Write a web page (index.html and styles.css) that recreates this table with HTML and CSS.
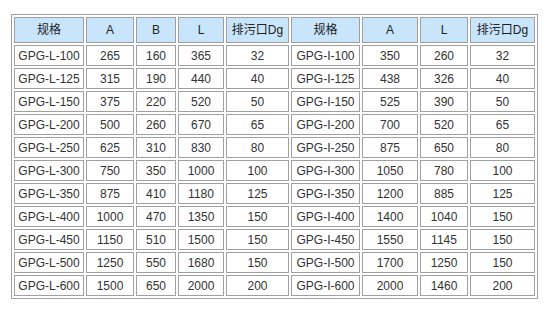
FILE: index.html
```html
<!DOCTYPE html>
<html lang="zh">
<head>
<meta charset="utf-8">
<title>GPG 规格表</title>
<link rel="stylesheet" href="styles.css">
</head>
<body>
<table class="spec">
  <thead>
    <tr>
      <th class="c1">规格</th><th class="c2">A</th><th class="c3">B</th><th class="c4">L</th><th class="c5">排污口Dg</th>
      <th class="c6">规格</th><th class="c7">A</th><th class="c8">L</th><th class="c9">排污口Dg</th>
    </tr>
  </thead>
  <tbody>
    <tr><td>GPG-L-100</td><td>265</td><td>160</td><td>365</td><td>32</td><td>GPG-I-100</td><td>350</td><td>260</td><td>32</td></tr>
    <tr><td>GPG-L-125</td><td>315</td><td>190</td><td>440</td><td>40</td><td>GPG-I-125</td><td>438</td><td>326</td><td>40</td></tr>
    <tr><td>GPG-L-150</td><td>375</td><td>220</td><td>520</td><td>50</td><td>GPG-I-150</td><td>525</td><td>390</td><td>50</td></tr>
    <tr><td>GPG-L-200</td><td>500</td><td>260</td><td>670</td><td>65</td><td>GPG-I-200</td><td>700</td><td>520</td><td>65</td></tr>
    <tr><td>GPG-L-250</td><td>625</td><td>310</td><td>830</td><td>80</td><td>GPG-I-250</td><td>875</td><td>650</td><td>80</td></tr>
    <tr><td>GPG-L-300</td><td>750</td><td>350</td><td>1000</td><td>100</td><td>GPG-I-300</td><td>1050</td><td>780</td><td>100</td></tr>
    <tr><td>GPG-L-350</td><td>875</td><td>410</td><td>1180</td><td>125</td><td>GPG-I-350</td><td>1200</td><td>885</td><td>125</td></tr>
    <tr><td>GPG-L-400</td><td>1000</td><td>470</td><td>1350</td><td>150</td><td>GPG-I-400</td><td>1400</td><td>1040</td><td>150</td></tr>
    <tr><td>GPG-L-450</td><td>1150</td><td>510</td><td>1500</td><td>150</td><td>GPG-I-450</td><td>1550</td><td>1145</td><td>150</td></tr>
    <tr><td>GPG-L-500</td><td>1250</td><td>550</td><td>1680</td><td>150</td><td>GPG-I-500</td><td>1700</td><td>1250</td><td>150</td></tr>
    <tr><td>GPG-L-600</td><td>1500</td><td>650</td><td>2000</td><td>200</td><td>GPG-I-600</td><td>2000</td><td>1460</td><td>200</td></tr>
  </tbody>
</table>
</body>
</html>
```
FILE: styles.css
```css
html, body {
  margin: 0;
  padding: 0;
  background: #ffffff;
}
body {
  padding: 14px 0 0 11px;
  font-family: Arial, "Liberation Sans", "Noto Sans CJK SC", sans-serif;
  font-size: 12px;
  color: #333333;
}
.spec {
  border-collapse: separate;
  border-spacing: 2px;
  border: 1px solid #a0a0a0;
  table-layout: fixed;
}
.spec th,
.spec td {
  border: 1px solid #a0a0a0;
  padding: 0;
  text-align: center;
  vertical-align: middle;
  white-space: nowrap;
  line-height: 14px;
}
.spec th {
  height: 24px;
  background: #c8e5fb;
  font-weight: normal;
  color: #222222;
}
.spec td {
  height: 19px;
}
.c1 { width: 68px; }
.c2 { width: 46px; }
.c3 { width: 38px; }
.c4 { width: 44px; }
.c5 { width: 61px; }
.c6 { width: 67px; }
.c7 { width: 54px; }
.c8 { width: 46px; }
.c9 { width: 63px; }
```
